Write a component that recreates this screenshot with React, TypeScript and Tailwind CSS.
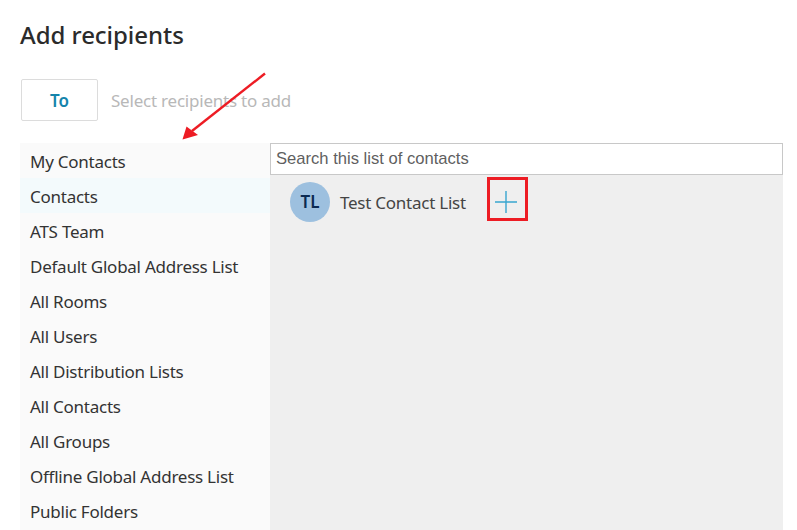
const lists = [
  "My Contacts",
  "Contacts",
  "ATS Team",
  "Default Global Address List",
  "All Rooms",
  "All Users",
  "All Distribution Lists",
  "All Contacts",
  "All Groups",
  "Offline Global Address List",
  "Public Folders",
];

const uiFont = "font-['Noto_Sans','Open_Sans',sans-serif]";

const App = () => {
  return (
    <div className={`relative h-[530px] w-[797px] overflow-hidden bg-white pl-5 pr-[14px] pt-[18px] ${uiFont}`}>
      <h1 className="h-[34px] text-[24px] font-medium leading-[34px] tracking-[-0.05px] text-[#2b2b2b]">
        Add recipients
      </h1>

      <div className="mt-[27px] flex h-[42px] items-center pl-px">
        <button className="h-[42px] w-[77px] rounded-[2px] border border-[#dcdcdc] bg-white pt-px text-[17px] font-semibold text-[#1484ab]">
          To
        </button>
        <span className="ml-[13px] pt-px text-[17px] tracking-[-0.22px] text-[#b8b8b8]">Select recipients to add</span>
      </div>

      <div className="mt-[22px] flex h-[387px]">
        <ul className="w-[250px] bg-[#fafafa]">
          {lists.map((name) => (
            <li
              key={name}
              className={`flex h-[35px] items-center pl-[10px] pt-[2px] text-[17px] tracking-[-0.25px] text-[#333333] ${
                name === "Contacts" ? "bg-[#f3fafc]" : ""
              }`}
            >
              {name}
            </li>
          ))}
        </ul>

        <div className="flex-1 bg-[#efefef]">
          <div className="flex h-[32px] items-center border border-[#c8c8c8] bg-white pl-[5px] font-['Liberation_Sans',sans-serif] text-[16.6px] text-[#5f5f5f]">
            Search this list of contacts
          </div>
          <div className="mt-[7px] flex items-center pl-5">
            <div className="flex h-10 w-10 items-center justify-center rounded-full bg-[#9dc0df] text-[17px] font-semibold text-[#0b2a52]">
              TL
            </div>
            <span className="ml-[10px] pt-[2px] text-[17px] tracking-[-0.25px] text-[#444444]">Test Contact List</span>
            <svg className="ml-[29px]" width="22" height="22" viewBox="0 0 22 22" fill="none" stroke="#39a6d0" strokeWidth="1.4">
              <path d="M11 0v22M0 11h22" />
            </svg>
          </div>
        </div>
      </div>

      {/* annotations on top of the screenshot */}
      <div className="absolute left-[487px] top-[177px] h-[44px] w-[41px] border-[3px] border-[#ed1c24]" />
      <svg className="absolute left-[175px] top-[68px]" width="95" height="76" viewBox="0 0 95 76" fill="none">
        <path d="M90 5.5 L17 63" stroke="#ed1c24" strokeWidth="2.4" />
        <path d="M7.5 71.5 L11.5 58.5 L23 67 Z" fill="#ed1c24" />
      </svg>
    </div>
  );
};

export default App;
